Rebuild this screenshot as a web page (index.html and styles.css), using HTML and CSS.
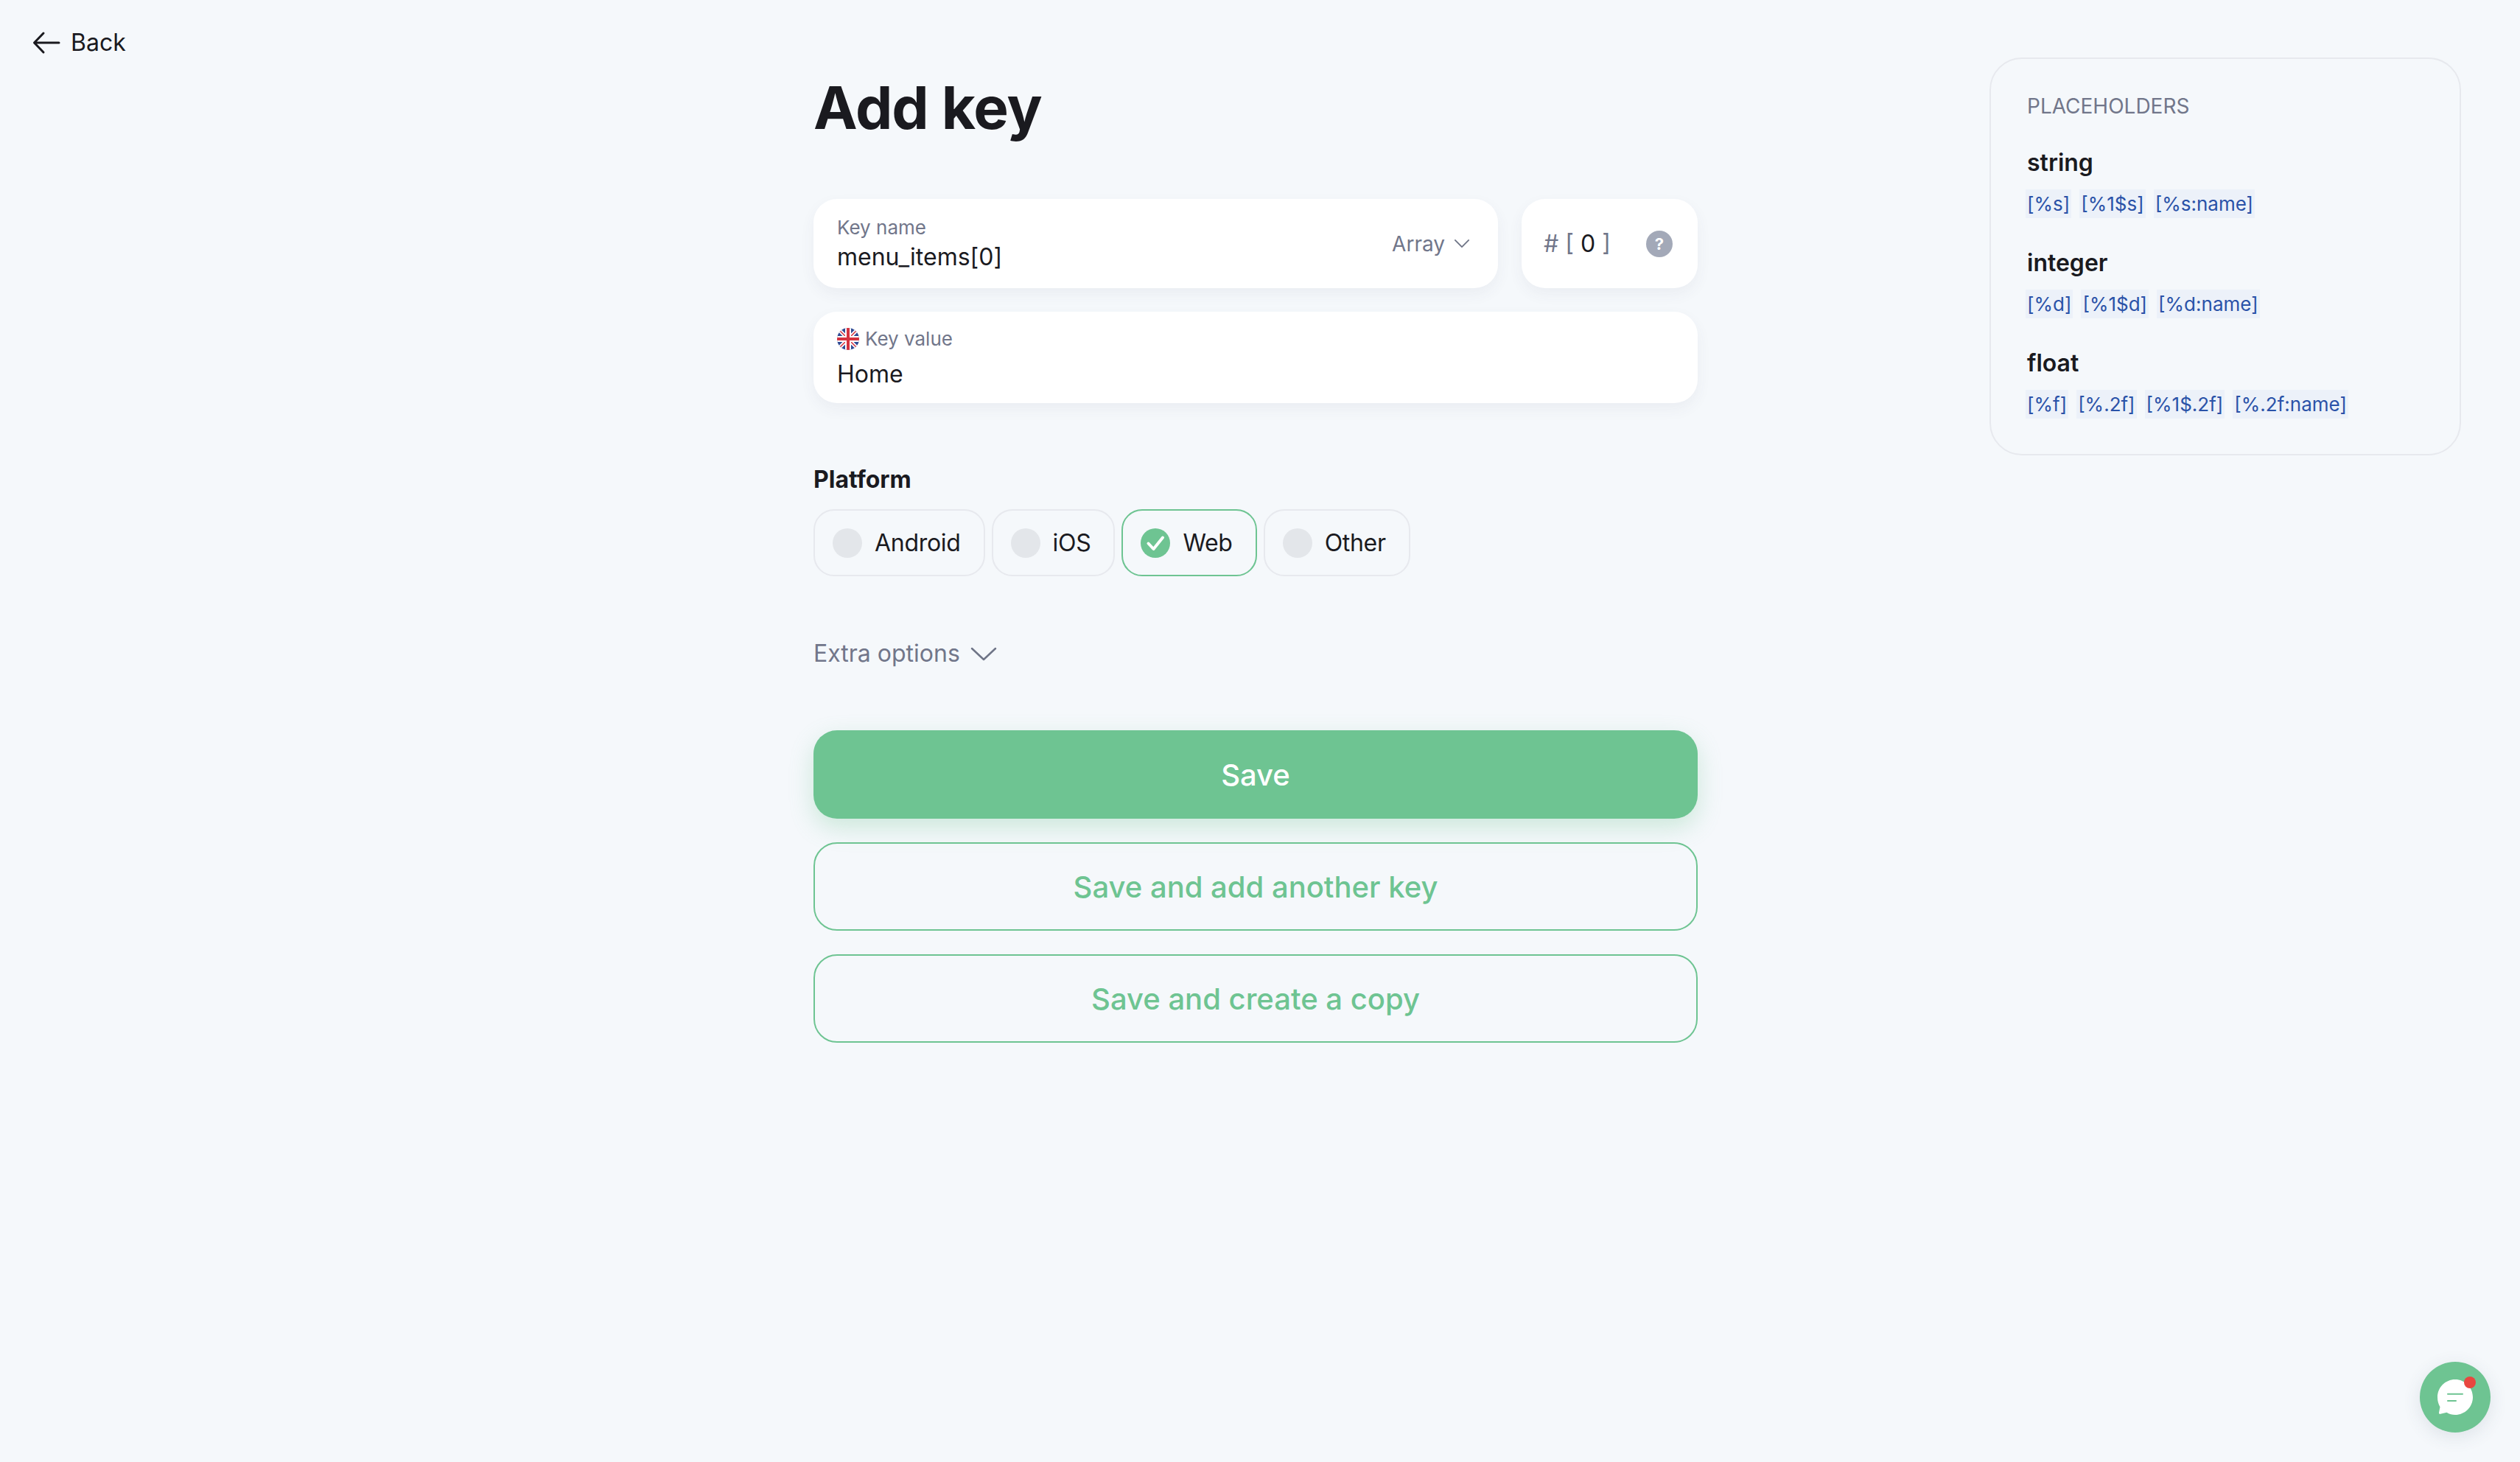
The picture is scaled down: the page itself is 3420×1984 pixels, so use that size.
FILE: index.html
```html
<!DOCTYPE html>
<html lang="en">

<head>
    <meta charset="UTF-8">
    <title>Add key</title>
    <link rel="stylesheet" href="styles.css">
</head>

<body>
    <div class="page">
        <div class="left-col">
            <a class="back-link" href="#">
                <svg class="back-icon" viewBox="0 0 38 32" fill="none" stroke="#1a1a1f" stroke-width="3" stroke-linecap="round" stroke-linejoin="round">
                    <path d="M36 16H3M15 3L2.500 16L15 29" />
                </svg>
                <span>Back</span>
            </a>
        </div>

        <main class="form-col">
            <h1 class="title">Add key</h1>

            <div class="field-row">
                <div class="card name-card">
                    <div class="name-text">
                        <div class="field-label">Key name</div>
                        <div class="field-value">menu_items[0]</div>
                    </div>
                    <div class="type-select">
                        <span>Array</span>
                        <svg class="type-chevron" viewBox="0 0 24 14" fill="none" stroke="#6f7587" stroke-width="2" stroke-linecap="round" stroke-linejoin="round">
                            <path d="M2 2L12 12L22 2" />
                        </svg>
                    </div>
                </div>
                <div class="card index-card">
                    <div class="index-text"><span class="muted">#</span> <span class="muted">[</span> 0 <span class="muted">]</span></div>
                    <div class="help-icon">?</div>
                </div>
            </div>

            <div class="card value-card">
                <div class="field-label value-label">
                    <svg class="flag" viewBox="0 0 30 30">
                        <defs>
                            <clipPath id="flagClip">
                                <circle cx="15" cy="15" r="15" />
                            </clipPath>
                        </defs>
                        <g clip-path="url(#flagClip)">
                            <rect width="30" height="30" fill="#2f4a94" />
                            <path d="M0 0L30 30M30 0L0 30" stroke="#fff" stroke-width="5" />
                            <path d="M0 0L30 30M30 0L0 30" stroke="#d5323f" stroke-width="1.500" />
                            <path d="M15 0V30M0 15H30" stroke="#fff" stroke-width="8" />
                            <path d="M15 0V30M0 15H30" stroke="#d5323f" stroke-width="4" />
                        </g>
                    </svg>
                    <span>Key value</span>
                </div>
                <div class="field-value">Home</div>
            </div>

            <div class="platform-label">Platform</div>
            <div class="platform-row">
                <div class="chip"><span class="radio"></span>Android</div>
                <div class="chip"><span class="radio"></span>iOS</div>
                <div class="chip chip-active">
                    <span class="radio radio-active">
                        <svg viewBox="0 0 40 40" fill="none" stroke="#fff" stroke-width="4" stroke-linecap="round" stroke-linejoin="round">
                            <path d="M10.500 20.500L17.500 28L30 12.500" />
                        </svg>
                    </span>Web
                </div>
                <div class="chip"><span class="radio"></span>Other</div>
            </div>

            <div class="extra-options">
                <span>Extra options</span>
                <svg class="extra-chevron" viewBox="0 0 36 20" fill="none" stroke="#6f7587" stroke-width="2.500" stroke-linecap="round" stroke-linejoin="round">
                    <path d="M2 3L18 18L34 3" />
                </svg>
            </div>

            <button class="btn btn-primary">Save</button>
            <button class="btn btn-outline">Save and add another key</button>
            <button class="btn btn-outline">Save and create a copy</button>
        </main>

        <aside class="placeholders">
            <div class="placeholders-title">PLACEHOLDERS</div>
            <div class="ph-group">
                <div class="ph-name">string</div>
                <div class="ph-codes">
                    <span class="ph-code">[%s]</span>
                    <span class="ph-code">[%1$s]</span>
                    <span class="ph-code">[%s:name]</span>
                </div>
            </div>
            <div class="ph-group">
                <div class="ph-name">integer</div>
                <div class="ph-codes">
                    <span class="ph-code">[%d]</span>
                    <span class="ph-code">[%1$d]</span>
                    <span class="ph-code">[%d:name]</span>
                </div>
            </div>
            <div class="ph-group">
                <div class="ph-name">float</div>
                <div class="ph-codes">
                    <span class="ph-code">[%f]</span>
                    <span class="ph-code">[%.2f]</span>
                    <span class="ph-code">[%1$.2f]</span>
                    <span class="ph-code">[%.2f:name]</span>
                </div>
            </div>
        </aside>
    </div>

    <div class="chat-button">
        <svg viewBox="0 0 56 56" class="chat-icon">
            <path d="M28 4C14.700 4 4 14.700 4 28C4 33 5.200 37.500 7.500 41.300L6 49C5.700 50.300 6.800 51.200 8 50.800L16.500 48.800C20 51 24 52 28 52C41.300 52 52 41.300 52 28C52 14.700 41.300 4 28 4Z" fill="#fff" />
            <path d="M18 23.700H38M18 33H29" stroke="#6ec492" stroke-width="2" stroke-linecap="round" />
        </svg>
        <span class="chat-dot"></span>
    </div>
</body>

</html>
```

FILE: styles.css
```css
html,
body {
    margin: 0;
    padding: 0;
    height: 100%;
    background-color: #f5f8fb;
    color: #1a1a1f;
    font-family: Inter, "Liberation Sans", sans-serif;
}

.page {
    display: grid;
    grid-template-columns: 1104px 1200px 1fr;
    min-height: 100%;
    align-items: start;
}

/* back link */
.left-col {
    padding: 36px 0 0 44px;
}

.back-link {
    display: flex;
    align-items: center;
    gap: 14px;
    color: #1a1a1f;
    text-decoration: none;
    font-size: 32px;
    line-height: 44px;
}

.back-icon {
    width: 38px;
    height: 32px;
}

/* main form */
.form-col {
    padding-top: 96px;
}

.title {
    margin: 0 0 74px;
    font-size: 80px;
    line-height: 100px;
    font-weight: 700;
    letter-spacing: -1px;
    color: #1a1a1f;
}

.field-row {
    display: flex;
    gap: 32px;
    margin-bottom: 32px;
}

.card {
    background-color: #fff;
    border-radius: 32px;
    box-shadow: 0 8px 20px rgba(60, 70, 100, 0.06);
    box-sizing: border-box;
}

.name-card {
    flex: 1;
    height: 121px;
    display: flex;
    align-items: center;
    justify-content: space-between;
    padding: 0 38px 0 32px;
}

.field-label {
    font-size: 26px;
    line-height: 32px;
    color: #71768a;
}

.field-value {
    font-size: 32px;
    line-height: 40px;
    color: #1a1a1f;
}

.name-text .field-label {
    margin-bottom: 4px;
}

.type-select {
    display: flex;
    align-items: center;
    gap: 12px;
    font-size: 28px;
    color: #71768a;
}

.type-chevron {
    width: 22px;
    height: 13px;
}

.index-card {
    width: 239px;
    height: 121px;
    display: flex;
    align-items: center;
    justify-content: space-between;
    padding: 0 34px 0 30px;
}

.index-text {
    font-size: 32px;
    color: #1a1a1f;
    white-space: pre;
}

.muted {
    color: #71768a;
}

.help-icon {
    width: 36px;
    height: 36px;
    border-radius: 50%;
    background-color: #a3a9b8;
    color: #fff;
    font-size: 22px;
    font-weight: 700;
    line-height: 36px;
    text-align: center;
}

.value-card {
    height: 124px;
    padding: 21px 32px 0;
}

.value-label {
    display: flex;
    align-items: center;
    gap: 8px;
    margin-bottom: 12px;
}

.flag {
    width: 30px;
    height: 30px;
}

/* platform */
.platform-label {
    margin-top: 84px;
    margin-bottom: 20px;
    font-size: 32px;
    line-height: 40px;
    font-weight: 700;
}

.platform-row {
    display: flex;
    gap: 9px;
}

.chip {
    display: flex;
    align-items: center;
    gap: 17px;
    box-sizing: border-box;
    height: 91px;
    padding: 0 31px 0 24px;
    border: 2px solid #e7e9ee;
    border-radius: 28px;
    font-size: 32px;
    letter-spacing: -0.3px;
}

.chip-active {
    border-color: #6ec492;
}

.radio {
    width: 40px;
    height: 40px;
    border-radius: 50%;
    background-color: #e3e6ea;
    flex: none;
}

.radio-active {
    background-color: #6ec492;
}

.radio svg {
    display: block;
    width: 40px;
    height: 40px;
}

.extra-options {
    display: flex;
    align-items: center;
    gap: 14px;
    margin-top: 85px;
    margin-bottom: 84px;
    font-size: 32px;
    line-height: 40px;
    color: #71768a;
}

.extra-chevron {
    width: 36px;
    height: 20px;
}

/* buttons */
.btn {
    display: block;
    width: 100%;
    height: 120px;
    margin-bottom: 32px;
    box-sizing: border-box;
    border-radius: 32px;
    font-family: inherit;
    font-size: 40px;
    font-weight: 500;
}

.btn-primary {
    background-color: #6ec492;
    border: none;
    color: #fff;
    box-shadow: 0 12px 32px rgba(110, 196, 146, 0.3);
}

.btn-outline {
    background-color: transparent;
    border: 2px solid #6ec492;
    color: #6ec492;
}

/* placeholders panel */
.placeholders {
    margin: 78px 0 0 396px;
    width: 640px;
    box-sizing: border-box;
    padding: 46px 48px 48px 47px;
    border: 2px solid #e7e9ee;
    border-radius: 44px;
}

.placeholders-title {
    padding-left: 2px;
    font-size: 28px;
    line-height: 36px;
    color: #71768a;
    margin-bottom: 39px;
}

.ph-group {
    margin-bottom: 41px;
}

.ph-group:last-child {
    margin-bottom: 0;
}

.ph-name {
    padding-left: 2px;
    font-size: 32px;
    line-height: 40px;
    font-weight: 600;
    margin-bottom: 16px;
}

.ph-codes {
    display: flex;
    gap: 11px;
}

.ph-code {
    padding: 0 2px;
    background-color: #ecf1f9;
    color: #2a52a8;
    font-size: 26px;
    line-height: 39px;
}

/* chat */
.chat-button {
    position: fixed;
    right: 40px;
    bottom: 40px;
    width: 96px;
    height: 96px;
    border-radius: 50%;
    background-color: #6ec492;
    box-shadow: 0 6px 24px rgba(60, 70, 100, 0.12);
    display: flex;
    align-items: center;
    justify-content: center;
}

.chat-icon {
    width: 56px;
    height: 56px;
}

.chat-dot {
    position: absolute;
    top: 20px;
    right: 20px;
    width: 16px;
    height: 16px;
    border-radius: 50%;
    background-color: #e8473f;
}
```
